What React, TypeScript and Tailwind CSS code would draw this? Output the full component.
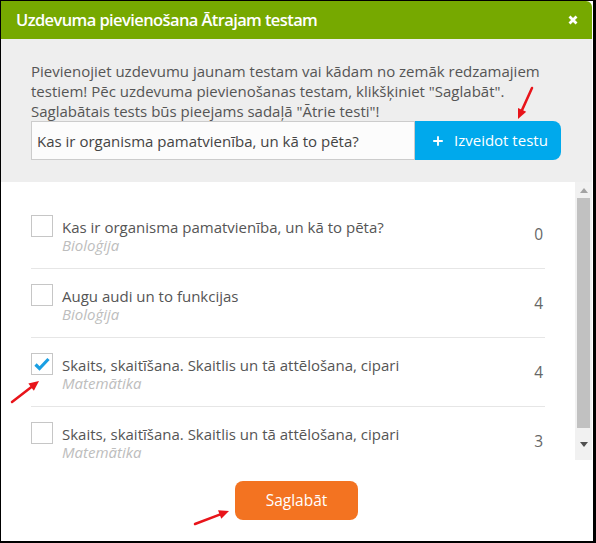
import { Plus } from "lucide-react";

type Task = {
  title: string;
  subject: string;
  count: number;
  checked?: boolean;
};

const tasks: Task[] = [
  { title: "Kas ir organisma pamatvienība, un kā to pēta?", subject: "Bioloģija", count: 0 },
  { title: "Augu audi un to funkcijas", subject: "Bioloģija", count: 4 },
  { title: "Skaits, skaitīšana. Skaitlis un tā attēlošana, cipari", subject: "Matemātika", count: 4, checked: true },
  { title: "Skaits, skaitīšana. Skaitlis un tā attēlošana, cipari", subject: "Matemātika", count: 3 },
];

function Arrow({ x1, y1, x2, y2 }: { x1: number; y1: number; x2: number; y2: number }) {
  // red annotation arrow, head at (x2, y2)
  const a = Math.atan2(y2 - y1, x2 - x1);
  const len = 10;
  const w = 4.5;
  const bx = x2 - Math.cos(a) * len;
  const by = y2 - Math.sin(a) * len;
  const p1 = `${bx + Math.sin(a) * w},${by - Math.cos(a) * w}`;
  const p2 = `${bx - Math.sin(a) * w},${by + Math.cos(a) * w}`;
  return (
    <g>
      <line x1={x1} y1={y1} x2={bx} y2={by} stroke="#e8141a" strokeWidth="2.5" strokeLinecap="round" />
      <polygon points={`${x2},${y2} ${p1} ${p2}`} fill="#e8141a" />
    </g>
  );
}

function Checkbox({ checked }: { checked?: boolean }) {
  return (
    <div className="w-[22px] h-[22px] shrink-0 border border-[#c6c6c6] bg-white flex items-center justify-center">
      {checked && (
        <svg width="16" height="14" viewBox="0 0 16 14">
          <path d="M1.5 7.5 L5.5 11.5 L14.5 2" fill="none" stroke="#1a9fe3" strokeWidth="3.2" />
        </svg>
      )}
    </div>
  );
}

function Scrollbar() {
  return (
    <div className="w-[17px] shrink-0 bg-[#f1f1f1] flex flex-col">
      <div className="h-[16px] flex items-center justify-center">
        <svg width="8" height="5" viewBox="0 0 8 5">
          <polygon points="4,0 8,5 0,5" fill="#a3a3a3" />
        </svg>
      </div>
      <div className="mx-[2px] h-[230px] bg-[#c1c1c1]" />
      <div className="flex-1 flex items-center justify-center">
        <svg width="8" height="5" viewBox="0 0 8 5">
          <polygon points="0,0 8,0 4,5" fill="#505050" />
        </svg>
      </div>
    </div>
  );
}

export default function App() {
  return (
    <div
      className="relative w-[596px] h-[543px] border-l border-t border-r-[3px] border-b-2 border-black bg-white pr-px flex flex-col overflow-hidden text-[#555]"
      style={{ fontFamily: '"Open Sans", sans-serif' }}
    >
      {/* Header */}
      <div className="h-[38px] shrink-0 bg-[#76a900] rounded-tr-[6px] flex items-center justify-between pl-[15px] pr-[14px]">
        <h1 className="text-white text-[16.5px] font-semibold tracking-[-0.6px] leading-none">
          Uzdevuma pievienošana Ātrajam testam
        </h1>
        <svg width="10" height="10" viewBox="0 0 10 10">
          <path d="M1.5 1.5 L8.5 8.5 M8.5 1.5 L1.5 8.5" stroke="white" strokeWidth="2.8" />
        </svg>
      </div>

      {/* Create new test */}
      <div className="bg-[#eeeeee] shrink-0 pt-[22px] pb-[22px] pl-[30px] pr-[30px]">
        <p className="text-[15px] leading-[20px] text-[#555]">
          Pievienojiet uzdevumu jaunam testam vai kādam no zemāk redzamajiem testiem! Pēc uzdevuma pievienošanas
          testam, klikšķiniet "Saglabāt". Saglabātais tests būs pieejams sadaļā "Ātrie testi"!
        </p>
        <div className="flex h-[39px]">
          <input
            type="text"
            defaultValue="Kas ir organisma pamatvienība, un kā to pēta?"
            className="w-[384px] h-full border border-[#cccccc] bg-[#fcfcfc] px-[5px] text-[15px] text-[#444] outline-none"
          />
          <button className="w-[146px] h-full bg-[#00a9ec] rounded-r-[8px] text-white text-[15px] flex items-center pl-[16px] gap-[9px]">
            <Plus className="w-[14px] h-[14px]" strokeWidth={3.2} />
            Izveidot testu
          </button>
        </div>
      </div>

      {/* Task list */}
      <div className="h-[278px] shrink-0 flex bg-white">
        <div className="flex-1 overflow-hidden pt-[18px]">
          {tasks.map((t, i) => (
            <div key={i} className="mx-[30px] w-[514px] h-[69px] border-b border-[#e6e6e6] flex items-start justify-between">
              <div className="flex items-start gap-[9px] pt-[15px]">
                <Checkbox checked={t.checked} />
                <div className="pt-[2px]">
                  <div className="text-[15px] leading-[20px] text-[#555]">{t.title}</div>
                  <div className="text-[15px] leading-[17px] italic text-[#bdbdbd]">{t.subject}</div>
                </div>
              </div>
              <div className="self-center pt-[1px] pr-[2px] text-[15.5px] text-[#666]">{t.count}</div>
            </div>
          ))}
        </div>
        <Scrollbar />
      </div>

      {/* Footer */}
      <div className="flex-1 flex justify-center pt-[21px]">
        <button className="w-[123px] h-[39px] bg-[#f37321] rounded-[8px] text-white text-[15.5px]">Saglabāt</button>
      </div>

      <svg className="absolute left-[-1px] top-[-1px] pointer-events-none" width="596" height="543">
        <Arrow x1={532} y1={88} x2={518} y2={119} />
        <Arrow x1={12} y1={402} x2={39} y2={381} />
        <Arrow x1={195} y1={524} x2={229} y2={511} />
      </svg>
    </div>
  );
}
